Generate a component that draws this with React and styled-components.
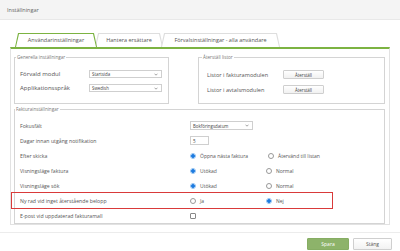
import React from 'react';
import styled, { createGlobalStyle } from 'styled-components';

const GlobalStyle = createGlobalStyle`
  html, body {
    margin: 0;
    padding: 0;
    background: #fff;
  }
  body {
    font-family: "Open Sans", "Liberation Sans", sans-serif;
    color: #555;
    width: 400px;
    height: 251px;
    overflow: hidden;
  }
`;

const Dialog = styled.div`
  display: flex;
  flex-direction: column;
  width: 400px;
  height: 251px;
`;

const Header = styled.div`
  height: 20px;
  box-sizing: border-box;
  padding: 0 7px;
  display: flex;
  align-items: center;
  background: #f4f4f4;
  border-bottom: 1px solid #e8e8e8;
  font-size: 5.5px;
  color: #666;
`;

const TabBar = styled.div`
  display: flex;
  align-items: flex-end;
  height: 14px;
  margin: 13px 10px 0;
  padding-left: 5px;
`;

// trapezoid tab: outer layer is the border colour, inner layer the fill
const Tab = styled.div`
  position: relative;
  height: 14px;
  width: ${p => p.$w}px;
  margin-right: -2px;
  display: flex;
  align-items: center;
  justify-content: center;
  font-size: 5.5px;
  color: #555;
  z-index: ${p => (p.$active ? 2 : 1)};

  &::before,
  &::after {
    content: '';
    position: absolute;
    clip-path: polygon(3px 0, calc(100% - 3px) 0, 100% 100%, 0 100%);
    border-radius: 3px 3px 0 0;
    z-index: -1;
  }
  &::before {
    inset: 0;
    background: ${p => (p.$active ? '#7cb342' : '#dedede')};
  }
  &::after {
    inset: 1px 1px 0 1px;
    background: #fff;
  }
`;

const Panel = styled.div`
  margin: 0 10px;
  border: 1px solid #e2e2e2;
  border-top: 2px solid #7cb342;
  padding: 5px 4px 0 3px;
  display: flex;
  flex-direction: column;
  gap: 2px;
`;

const TopRow = styled.div`
  display: grid;
  grid-template-columns: 155px 1fr;
  column-gap: 29px;
`;

const Fieldset = styled.fieldset`
  margin: 0;
  min-width: 0;
  border: 1px solid #d4d4d4;
  padding: ${p => p.$pad};
`;

const Legend = styled.legend`
  font-size: 4.6px;
  line-height: 6px;
  color: #777;
  padding: 0 1px;
  margin-left: ${p => p.$shift}px;
`;

const Row = styled.div`
  display: grid;
  grid-template-columns: ${p => p.$cols};
  align-items: center;
  height: ${p => p.$h}px;
`;

const Label = styled.span`
  font-size: ${p => p.$size || 5.5}px;
  color: #555;
  white-space: nowrap;
`;

const Select = styled.div`
  box-sizing: border-box;
  width: ${p => p.$w}px;
  height: ${p => p.$h || 8}px;
  border: 1px solid #cfcfcf;
  background: #fff;
  display: flex;
  align-items: center;
  justify-content: space-between;
  padding: 0 3px 0 2px;
  font-size: 4.4px;
  color: #444;
`;

const TextInput = styled.div`
  box-sizing: border-box;
  width: 19px;
  height: 9px;
  border: 1px solid #cfcfcf;
  display: flex;
  align-items: center;
  padding-left: 2px;
  font-size: 4.6px;
  color: #444;
`;

const ResetButton = styled.div`
  box-sizing: border-box;
  width: 41px;
  height: 9px;
  border: 1px solid #cfcfcf;
  border-radius: 1px;
  background: linear-gradient(#fff, #f1f1f1);
  display: flex;
  align-items: center;
  justify-content: center;
  font-size: 4.4px;
  color: #444;
`;

const Choice = styled.span`
  display: flex;
  align-items: center;
  gap: 4px;
  font-size: 5px;
  color: #555;
`;

const Radio = styled.span`
  box-sizing: border-box;
  width: 6px;
  height: 6px;
  border-radius: 50%;
  border: 1px solid ${p => (p.$on ? '#8fc0f0' : '#999')};
  background: ${p => (p.$on ? 'radial-gradient(circle, #1e7be0 0 1.7px, #cfe5fb 2px)' : '#fff')};
`;

const Checkbox = styled.span`
  box-sizing: border-box;
  width: 6px;
  height: 6px;
  border: 1px solid #888;
  border-radius: 1px;
  background: #fff;
`;

const FakturaRow = styled(Row)`
  position: relative;
  &::after {
    content: ${p => (p.$marked ? "''" : 'none')};
    position: absolute;
    top: -1px;
    bottom: -1px;
    left: -9px;
    width: 322px;
    border: 1.5px solid #d93a3a;
    box-sizing: border-box;
  }
`;

const Footer = styled.div`
  margin-top: 7px;
  border-top: 1px solid #ececec;
  padding: 5px 8px 0 0;
  display: flex;
  justify-content: flex-end;
  gap: 4px;
`;

const FooterButton = styled.div`
  box-sizing: border-box;
  width: ${p => p.$w}px;
  height: 12px;
  display: flex;
  align-items: center;
  justify-content: center;
  font-size: 5px;
  border-radius: 1px;
  color: ${p => (p.$primary ? '#fff' : '#555')};
  background: ${p => (p.$primary ? '#8db36a' : 'linear-gradient(#fff, #f2f2f2)')};
  border: 1px solid ${p => (p.$primary ? '#86ad63' : '#cfcfcf')};
`;

const Chevron = () => (
  <svg width="4" height="3" viewBox="0 0 4 3">
    <path d="M0.5 0.7 L2 2.2 L3.5 0.7" fill="none" stroke="#666" strokeWidth="0.6" />
  </svg>
);

const fakturaCols = '170px 76px 1fr';

const App = () => (
  <Dialog>
    <GlobalStyle />
    <Header>Inställningar</Header>

    <TabBar>
      <Tab $w={82} $active>Användarinställningar</Tab>
      <Tab $w={68}>Hantera ersättare</Tab>
      <Tab $w={119}>Förvalsinställningar - alla användare</Tab>
    </TabBar>

    <Panel>
      <TopRow>
        <Fieldset $pad="7px 5px 6px">
          <Legend $shift={-4}>Generella inställningar</Legend>
          <Row $cols="69px 1fr" $h={14}>
            <Label $size={6}>Förvald modul</Label>
            <Select $w={73}>Startsida<Chevron /></Select>
          </Row>
          <Row $cols="69px 1fr" $h={14}>
            <Label $size={6}>Applikationsspråk</Label>
            <Select $w={73}>Swedish<Chevron /></Select>
          </Row>
        </Fieldset>

        <Fieldset $pad="7px 8px 6px">
          <Legend $shift={-5}>Återställ listor</Legend>
          <Row $cols="76px 1fr" $h={15}>
            <Label $size={5.6}>Listor i fakturamodulen</Label>
            <ResetButton>Återställ</ResetButton>
          </Row>
          <Row $cols="76px 1fr" $h={15}>
            <Label $size={5.6}>Listor i avtalsmodulen</Label>
            <ResetButton>Återställ</ResetButton>
          </Row>
        </Fieldset>
      </TopRow>

      <Fieldset $pad="6px 5px 0">
        <Legend $shift={-5}>Fakturainställningar</Legend>
        <FakturaRow $cols={fakturaCols} $h={15}>
          <Label $size={5.2}>Fokusfält</Label>
          <Select $w={63} $h={9}>Bokföringsdatum<Chevron /></Select>
        </FakturaRow>
        <FakturaRow $cols={fakturaCols} $h={15}>
          <Label $size={5.2}>Dagar innan utgång notifikation</Label>
          <TextInput>5</TextInput>
        </FakturaRow>
        <FakturaRow $cols={fakturaCols} $h={15}>
          <Label $size={5.2}>Efter skicka</Label>
          <Choice><Radio $on />Öppna nästa faktura</Choice>
          <Choice style={{ marginLeft: '2px' }}><Radio />Återvänd till listan</Choice>
        </FakturaRow>
        <FakturaRow $cols={fakturaCols} $h={15}>
          <Label $size={5.2}>Visningsläge faktura</Label>
          <Choice><Radio $on />Utökad</Choice>
          <Choice><Radio />Normal</Choice>
        </FakturaRow>
        <FakturaRow $cols={fakturaCols} $h={15}>
          <Label $size={5.2}>Visningsläge sök</Label>
          <Choice><Radio $on />Utökad</Choice>
          <Choice><Radio />Normal</Choice>
        </FakturaRow>
        <FakturaRow $cols={fakturaCols} $h={15} $marked>
          <Label $size={5.2}>Ny rad vid inget återstående belopp</Label>
          <Choice><Radio />Ja</Choice>
          <Choice><Radio $on />Nej</Choice>
        </FakturaRow>
        <FakturaRow $cols={fakturaCols} $h={15}>
          <Label $size={5.2}>E-post vid uppdaterad fakturamall</Label>
          <Checkbox />
        </FakturaRow>
      </Fieldset>
    </Panel>

    <Footer>
      <FooterButton $w={42} $primary>Spara</FooterButton>
      <FooterButton $w={39}>Stäng</FooterButton>
    </Footer>
  </Dialog>
);

export default App;
